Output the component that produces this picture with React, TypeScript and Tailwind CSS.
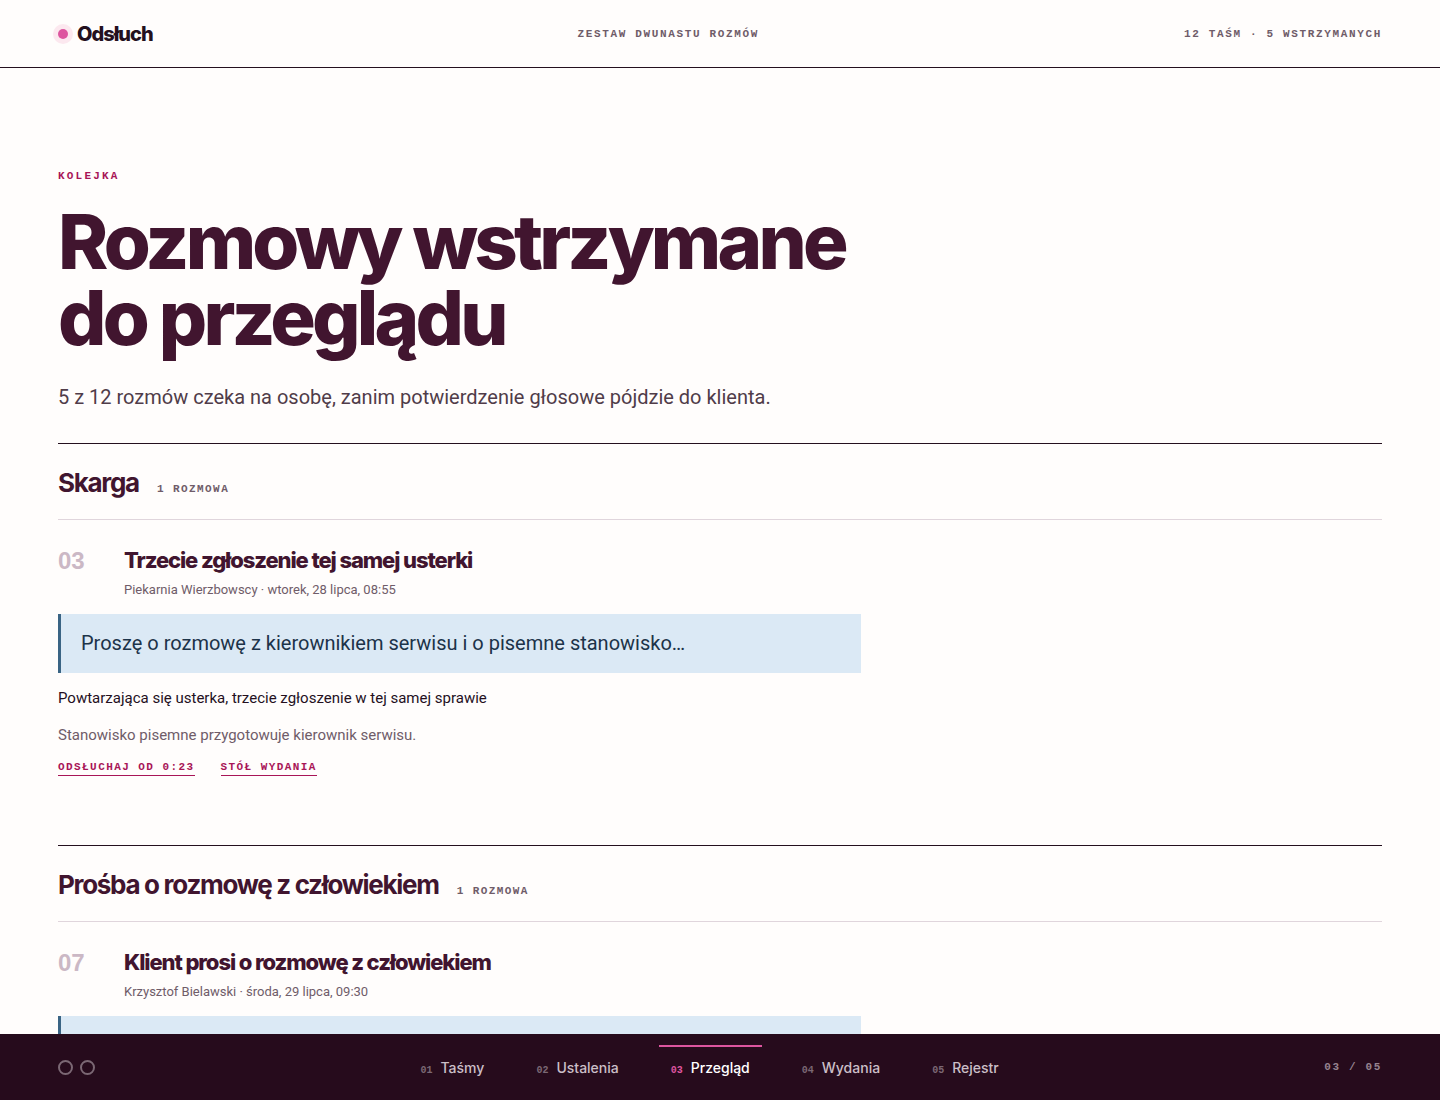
type Call = {
  no: string;
  title: string;
  meta: string;
  quote?: string;
  reason?: string;
  note?: string;
  links: string[];
};

type Group = { name: string; count: string; call: Call };

const groups: Group[] = [
  {
    name: "Skarga",
    count: "1 rozmowa",
    call: {
      no: "03",
      title: "Trzecie zgłoszenie tej samej usterki",
      meta: "Piekarnia Wierzbowscy · wtorek, 28 lipca, 08:55",
      quote: "Proszę o rozmowę z kierownikiem serwisu i o pisemne stanowisko…",
      reason: "Powtarzająca się usterka, trzecie zgłoszenie w tej samej sprawie",
      note: "Stanowisko pisemne przygotowuje kierownik serwisu.",
      links: ["Odsłuchaj od 0:23", "Stół wydania"],
    },
  },
  {
    name: "Prośba o rozmowę z człowiekiem",
    count: "1 rozmowa",
    call: {
      no: "07",
      title: "Klient prosi o rozmowę z człowiekiem",
      meta: "Krzysztof Bielawski · środa, 29 lipca, 09:30",
      links: [],
    },
  },
];

const tabs = [
  { no: "01", label: "Taśmy" },
  { no: "02", label: "Ustalenia" },
  { no: "03", label: "Przegląd", active: true },
  { no: "04", label: "Wydania" },
  { no: "05", label: "Rejestr" },
];

const mono = "font-['Liberation_Mono',monospace] text-[11px] leading-4 font-bold uppercase";
const display = "font-['Inter',sans-serif]";

function CallCard({ call }: { call: Call }) {
  return (
    <article className="pt-6">
      <div className="grid grid-cols-[66px_1fr]">
        <span className="font-['Liberation_Sans',sans-serif] text-[24px] leading-[34px] font-bold text-[#cbb8c5]">
          {call.no}
        </span>
        <div>
          <h3 className={`${display} text-[22px] leading-8 font-extrabold tracking-tighter text-[#41152f]`}>
            {call.title}
          </h3>
          <p className="mt-1 text-[13px] leading-5 text-[#6f5c69]">{call.meta}</p>
        </div>
      </div>
      <blockquote className="mt-3.5 min-h-[59px] max-w-[803px] border-l-3 border-[#3a6484] bg-[#dbe9f5] px-5 py-3.5 text-[20px] leading-[31px] text-[#1c3349]">
        {call.quote}
      </blockquote>
      {call.reason && <p className="mt-3.5 text-[15px] leading-[22px] text-[#24101e]">{call.reason}</p>}
      {call.note && <p className="mt-3.5 text-[15px] leading-6 text-[#6f5c69]">{call.note}</p>}
      {call.links.length > 0 && (
        <div className="mt-3 flex gap-[26px]">
          {call.links.map((l) => (
            <a key={l} href="#" className={`${mono} border-b border-[#a81557] tracking-[0.13em] text-[#a81557]`}>
              {l}
            </a>
          ))}
        </div>
      )}
    </article>
  );
}

export default function App() {
  return (
    <div className="flex h-screen flex-col bg-[#fffdfc] font-['Roboto',sans-serif] text-[#24101e]">
      <header className="flex h-[68px] shrink-0 items-center justify-between border-b border-[#24101e] px-[58px]">
        <a
          href="#"
          className={`${display} flex items-center gap-[9px] text-[20px] leading-7 font-extrabold tracking-tighter`}
        >
          <span className="size-2.5 rounded-full bg-[#dd559f] ring-5 ring-[#fce8ef]" />
          Odsłuch
        </a>
        <span className={`${mono} tracking-[0.15em] text-[#6f5c69]`}>Zestaw dwunastu rozmów</span>
        <span className={`${mono} tracking-[0.15em] text-[#6f5c69]`}>12 taśm · 5 wstrzymanych</span>
      </header>

      <main className="min-h-0 flex-1 overflow-y-auto px-[58px] pt-[100px] [scrollbar-width:none]">
        <p className={`${mono} tracking-[0.2em] text-[#a81557]`}>Kolejka</p>
        <h1 className={`${display} mt-[19px] text-[76px] leading-[76px] font-extrabold tracking-tighter text-[#41152f]`}>
          Rozmowy wstrzymane
          <br />
          do przeglądu
        </h1>
        <p className="mt-[26px] text-[20px] leading-8 text-[#503c49]">
          5 z 12 rozmów czeka na osobę, zanim potwierdzenie głosowe pójdzie do klienta.
        </p>
        <div className="mt-[30px] flex flex-col gap-[69px]">
          {groups.map((g) => (
            <section key={g.name} className="border-t border-[#24101e]">
              <div className="flex h-[76px] items-baseline gap-[18px] border-b border-[#e0d5dc] pt-[21px]">
                <h2 className={`${display} text-[26px] leading-9 font-bold tracking-tighter text-[#41152f]`}>
                  {g.name}
                </h2>
                <span className={`${mono} tracking-[0.13em] text-[#6f5c69]`}>{g.count}</span>
              </div>
              <CallCard call={g.call} />
            </section>
          ))}
        </div>
      </main>

      <footer className="flex h-[66px] shrink-0 items-center justify-between bg-[#260b1c] px-[58px]">
        <div className="flex gap-[7px]">
          <span className="size-[15px] rounded-full border-2 border-[#7b6874]" />
          <span className="size-[15px] rounded-full border-2 border-[#7b6874]" />
        </div>
        <nav className={`${display} flex gap-7`}>
          {tabs.map((t) => (
            <a
              key={t.no}
              href="#"
              className={`flex h-11 items-center border-t-2 px-3 ${t.active ? "border-[#dd559f]" : "border-transparent"}`}
            >
              <span className="flex items-baseline gap-2">
                <span
                  className={`font-['Liberation_Mono',monospace] text-[10px] font-bold ${t.active ? "text-[#dd559f]" : "text-[#7b6874]"}`}
                >
                  {t.no}
                </span>
                <span className={`text-[14px] leading-5 font-medium ${t.active ? "text-white" : "text-[#cbbfc7]"}`}>
                  {t.label}
                </span>
              </span>
            </a>
          ))}
        </nav>
        <span className={`${mono} tracking-[0.15em] text-[#95838f]`}>03 / 05</span>
      </footer>
    </div>
  );
}
